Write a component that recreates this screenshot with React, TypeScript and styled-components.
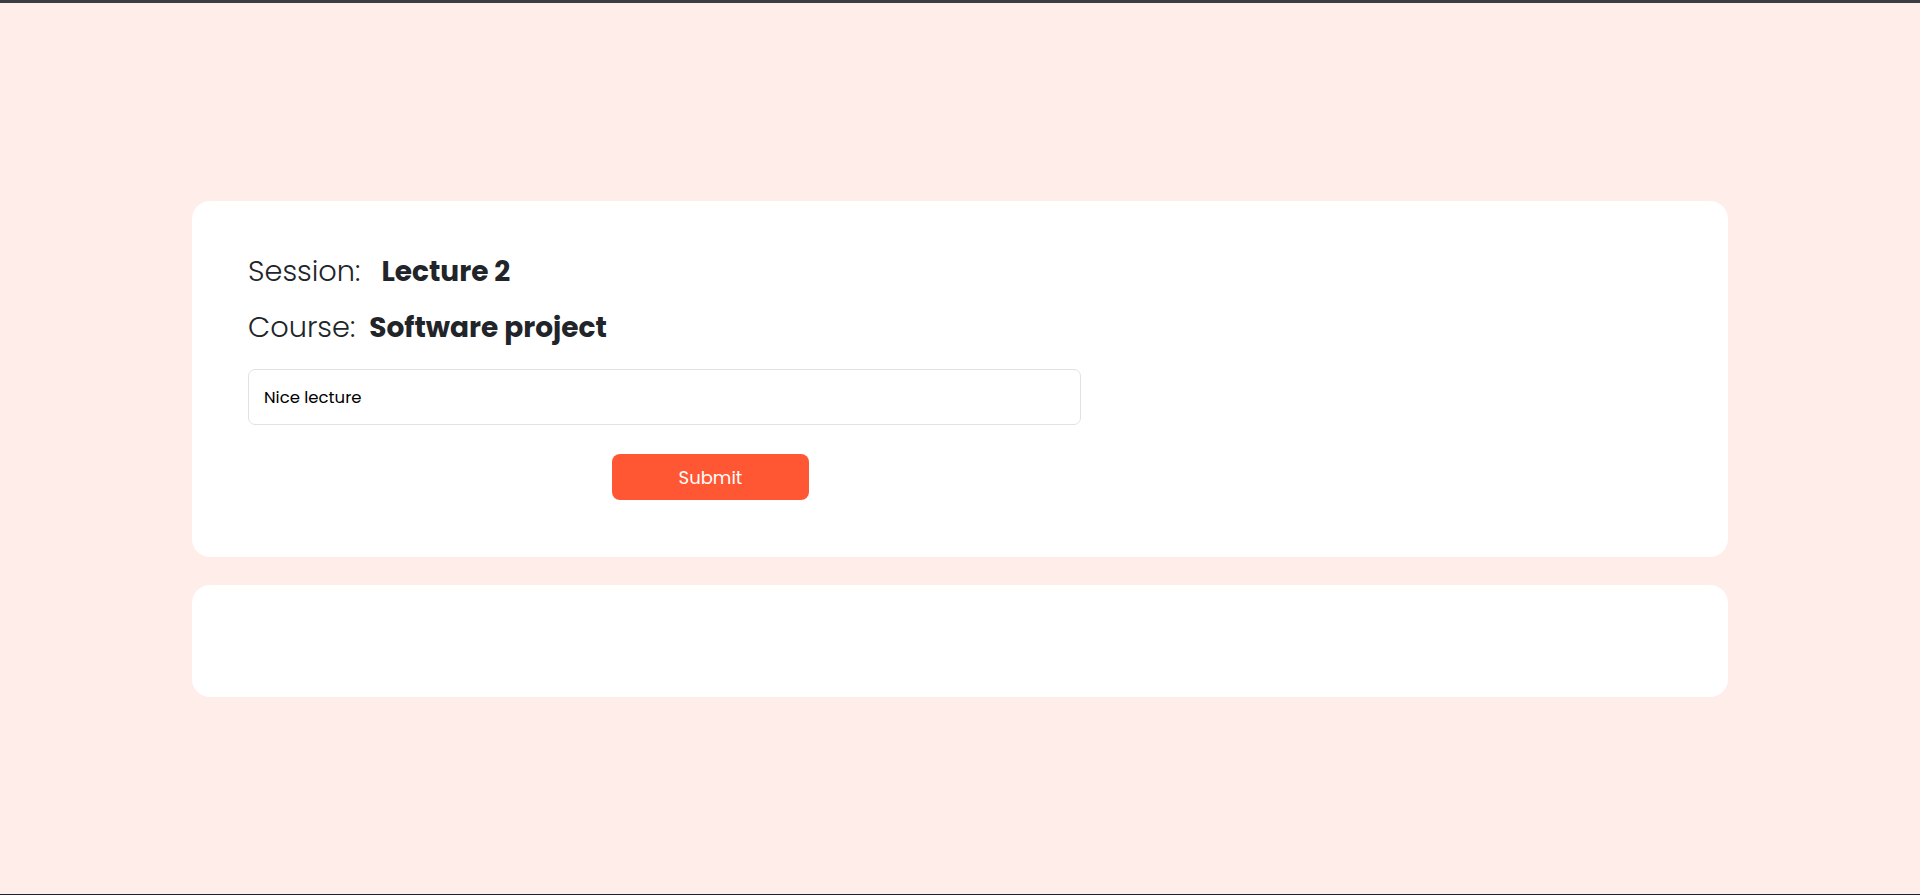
import React, { useState } from "react";
import styled, { createGlobalStyle } from "styled-components";

const GlobalStyle = createGlobalStyle`
  html, body {
    margin: 0;
    padding: 0;
  }
  body {
    background-color: #ffedea;
    font-family: "Poppins", "Inter", "Noto Sans", sans-serif;
    color: #212529;
    border-top: 3px solid #3b3c40;
    border-bottom: 1px solid #1c2033;
    min-height: 891px;
  }
`;

const Page = styled.div`
  display: flex;
  flex-direction: column;
  gap: 28px;
  width: 80%;
  margin: 0 auto;
  padding-top: 198px;
`;

const Card = styled.div<{ $height?: number }>`
  background-color: #fff;
  border-radius: 18px;
  padding: 49px 56px 57px;
  box-sizing: border-box;
  ${(p) => (p.$height ? `height: ${p.$height}px;` : "")}
`;

const InfoRow = styled.div`
  display: flex;
  align-items: baseline;
  height: 42px;
  font-size: 28px;
  line-height: 42px;
  margin-bottom: 14px;
`;

const Label = styled.span<{ $gap: number }>`
  font-weight: 300;
  font-size: 28.8px;
  line-height: 42px;
  margin-right: ${(p) => p.$gap}px;
`;

const Value = styled.span`
  font-weight: 700;
`;

const Form = styled.form`
  display: flex;
  flex-direction: column;
  width: 833px;
  margin-top: 21px;
`;

const Input = styled.input`
  box-sizing: border-box;
  height: 56px;
  width: 100%;
  padding: 0 15px;
  border: 1px solid #e2e2e2;
  border-radius: 7px;
  font-family: inherit;
  font-size: 16.5px;
  color: #000;
  outline: none;
`;

const Submit = styled.button`
  width: 197px;
  height: 46px;
  margin: 29px 0 0 364px;
  border: none;
  border-radius: 8px;
  background-color: #ff5733;
  color: #fff;
  font-family: inherit;
  font-size: 18px;
  cursor: pointer;
`;

const App = () => {
  const [comment, setComment] = useState("Nice lecture");

  const handleSubmit = (e: React.FormEvent<HTMLFormElement>) => {
    e.preventDefault();
  };

  return (
    <>
      <GlobalStyle />
      <Page>
        <Card>
          <InfoRow>
            <Label $gap={21}>Session:</Label>
            <Value>Lecture 2</Value>
          </InfoRow>
          <InfoRow>
            <Label $gap={14}>Course:</Label>
            <Value>Software project</Value>
          </InfoRow>
          <Form onSubmit={handleSubmit}>
            <Input
              value={comment}
              onChange={(e: React.ChangeEvent<HTMLInputElement>) =>
                setComment(e.target.value)
              }
            />
            <Submit type='submit'>Submit</Submit>
          </Form>
        </Card>
        <Card $height={112} />
      </Page>
    </>
  );
};

export default App;
